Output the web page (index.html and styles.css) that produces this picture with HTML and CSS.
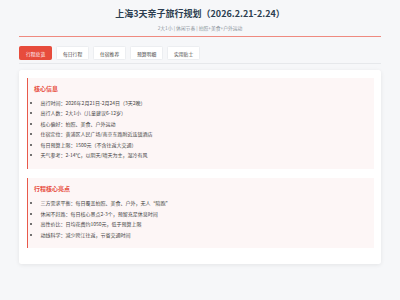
FILE: index.html
```html
<!DOCTYPE html>
<html lang="zh-CN">
<head>
  <meta charset="UTF-8">
  <title>上海3天亲子旅行规划</title>
  <link rel="stylesheet" href="styles.css">
</head>
<body>

<div class="container">

  <div class="header">
    <h1>上海3天亲子旅行规划（2026.2.21-2.24）</h1>
    <p class="subtitle">2大1小 | 休闲节奏 | 拍照+美食+户外运动</p>
  </div>

  <div class="tabs">
    <button class="tab active">行程总览</button>
    <button class="tab">每日行程</button>
    <button class="tab">住宿推荐</button>
    <button class="tab">预算明细</button>
    <button class="tab">实用贴士</button>
  </div>

  <div class="card">

    <!-- 核心信息 -->
    <div class="section">
      <h3>核心信息</h3>
      <ul>
        <li>出行时间：2026年2月21日-2月24日（3天2晚）</li>
        <li>出行人数：2大1小（儿童建议6-12岁）</li>
        <li>核心偏好：拍照、美食、户外运动</li>
        <li>住宿定位：黄浦区人民广场/南京东路附近连锁酒店</li>
        <li>每日预算上限：1500元（不含往返大交通）</li>
        <li>天气参考：2-14℃，以阴天/晴天为主，湿冷有风</li>
      </ul>
    </div>

    <!-- 行程核心亮点 -->
    <div class="section">
      <h3>行程核心亮点</h3>
      <ul>
        <li>三方需求平衡：每日覆盖拍照、美食、户外，无人“陪跑”</li>
        <li>休闲不赶路：每日核心景点2-3个，预留充足休息时间</li>
        <li>高性价比：日均花费约1050元，低于预算上限</li>
        <li>动线科学：减少跨江往返，节省交通时间</li>
      </ul>
    </div>

  </div>

</div>

</body>
</html>
```

FILE: styles.css
```css
body {
  font-family: "Noto Sans CJK SC", "Noto Sans", sans-serif;
  margin: 0;
  padding: 8px 19px;
  background-color: #f6f7f9;
  color: #444;
}

.header {
  text-align: center;
  padding-bottom: 5px;
  border-bottom: 1px solid #ef8a80;
}

h1 {
  margin: 0;
  font-size: 9px;
  line-height: 12px;
  font-weight: bold;
  color: #2c3e50;
}

.subtitle {
  margin: 3.5px 0 0;
  font-size: 4.8px;
  line-height: 7px;
  color: #8a9299;
}

.tabs {
  display: flex;
  gap: 3.8px;
  margin-top: 9.5px;
  padding-bottom: 3px;
  border-bottom: 1px solid #e6e8eb;
}

.tab {
  font-family: inherit;
  font-size: 4.8px;
  line-height: 7px;
  padding: 2.5px 6px;
  background: #fff;
  color: #444;
  border: 1px solid #eceef1;
  border-radius: 1.5px;
  cursor: pointer;
}

.tab.active {
  background: #e74c3c;
  border-color: #e74c3c;
  color: #fff;
}

.card {
  margin-top: 6px;
  background: #fff;
  padding: 7.5px 7.5px 16px;
  border-radius: 2.5px;
  box-shadow: 0 1px 4px rgba(0, 0, 0, 0.08);
}

.section {
  background: #fdf6f6;
  border-left: 1.5px solid #e8594b;
  padding: 7.5px 8px 7.3px 6.5px;
  margin-bottom: 9px;
}

.section:last-child {
  margin-bottom: 0;
}

.section h3 {
  margin: 0 0 5.7px;
  font-size: 6px;
  line-height: 8px;
  color: #e74c3c;
}

.section ul {
  margin: 0;
  padding-left: 6.5px;
}

.section li {
  font-size: 5px;
  line-height: 8px;
  margin-bottom: 2.5px;
  color: #444;
}
```
